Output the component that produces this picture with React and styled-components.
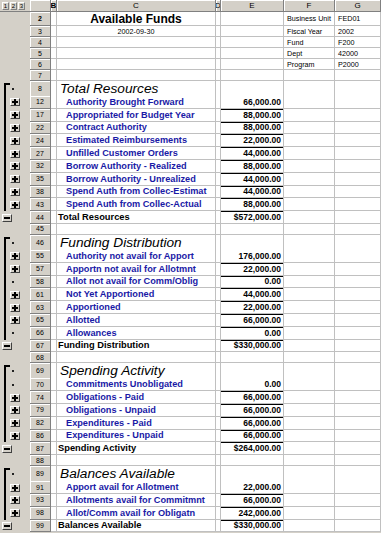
import React from "react";
import styled, { createGlobalStyle, css } from "styled-components";

const FACE = "#d4d0c8";
const GRID = "#c0c0c0";
const SHADE = "#808080";
const BLUE = "#1a1aa6";
const COLS = "30px 21px 6px 159px 5px 63px 51px 46px";

const GlobalStyle = createGlobalStyle`
  html, body {
    margin: 0;
    padding: 0;
    background: #fff;
  }
  body {
    font-family: "Liberation Sans", Arial, sans-serif;
    overflow: hidden;
  }
`;

const groups = [
  {
    row: 8,
    title: "Total Resources",
    items: [
      [12, "Authority Brought Forward", "66,000.00", "plus"],
      [17, "Appropriated for Budget Year", "88,000.00", "plus"],
      [22, "Contract Authority", "88,000.00", "plus"],
      [24, "Estimated Reimbursements", "22,000.00", "plus"],
      [27, "Unfilled Customer Orders", "44,000.00", "plus"],
      [32, "Borrow Authority - Realized", "88,000.00", "plus"],
      [35, "Borrow Authority - Unrealized", "44,000.00", "plus"],
      [38, "Spend Auth from Collec-Estimat", "44,000.00", "plus"],
      [43, "Spend Auth from Collec-Actual", "88,000.00", "plus"],
    ],
    total: [44, "Total Resources", "$572,000.00"],
    gap: 45,
  },
  {
    row: 46,
    title: "Funding Distribution",
    items: [
      [55, "Authority not avail for Apport", "176,000.00", "plus"],
      [57, "Apportn not avail for Allotmnt", "22,000.00", "plus"],
      [58, "Allot not avail for Comm/Oblig", "0.00", "dot"],
      [61, "Not Yet Apportioned", "44,000.00", "plus"],
      [63, "Apportioned", "22,000.00", "plus"],
      [65, "Allotted", "66,000.00", "plus"],
      [66, "Allowances", "0.00", "dot"],
    ],
    total: [67, "Funding Distribution", "$330,000.00"],
    gap: 68,
  },
  {
    row: 69,
    title: "Spending Activity",
    items: [
      [70, "Commitments Unobligated", "0.00", "dot"],
      [74, "Obligations - Paid", "66,000.00", "plus"],
      [79, "Obligations - Unpaid", "66,000.00", "plus"],
      [82, "Expenditures - Paid", "66,000.00", "plus"],
      [86, "Expenditures - Unpaid", "66,000.00", "plus"],
    ],
    total: [87, "Spending Activity", "$264,000.00"],
    gap: 88,
  },
  {
    row: 89,
    title: "Balances Available",
    items: [
      [91, "Apport avail for Allotment", "22,000.00", "plus"],
      [93, "Allotments avail for Commitmnt", "66,000.00", "plus"],
      [98, "Allot/Comm avail for Obligatn", "242,000.00", "plus"],
    ],
    total: [99, "Balances Available", "$330,000.00"],
  },
];

const info = [
  ["Business Unit", "FED01"],
  ["Fiscal Year", "2002"],
  ["Fund", "F200"],
  ["Dept", "42000"],
  ["Program", "P2000"],
  ["", ""],
];

const Sheet = styled.div`
  width: 381px;
  height: 533px;
  overflow: hidden;
  background: ${FACE};
`;

const Row = styled.div`
  display: grid;
  grid-template-columns: ${COLS};
  height: ${(p) => p.$h}px;
`;

const LevelBar = styled.div`
  display: flex;
  gap: 1px;
  padding: 2px 0 0 2px;
  background: ${FACE};
  border-bottom: 1px solid ${SHADE};
`;

const LevelButton = styled.span`
  display: flex;
  align-items: center;
  justify-content: center;
  width: 7px;
  height: 8px;
  box-sizing: border-box;
  border: 1px solid;
  border-color: #fff ${SHADE} ${SHADE} #fff;
  font-size: 6px;
  line-height: 1;
  color: #000;
`;

const ColHead = styled.div`
  display: flex;
  align-items: center;
  justify-content: center;
  overflow: hidden;
  box-sizing: border-box;
  background: ${FACE};
  border-right: 1px solid ${SHADE};
  border-bottom: 1px solid ${SHADE};
  box-shadow: inset 1px 1px 0 #fff;
  font-size: 8px;
  font-weight: ${(p) => (p.$active ? 700 : 400)};
  color: #000;
`;

const bracket = {
  start: css`
    background-image: linear-gradient(#000, #000), linear-gradient(#000, #000);
    background-size: 2px 100%, 6px 2px;
    background-position: 4px 2px, 4px 2px;
    background-repeat: no-repeat;
  `,
  line: css`
    background-image: linear-gradient(#000, #000);
    background-size: 2px 100%;
    background-position: 4px 0;
    background-repeat: no-repeat;
  `,
};

const Outline = styled.div`
  display: flex;
  align-items: center;
  background-color: ${FACE};
  ${(p) => p.$bracket && bracket[p.$bracket]}
`;

const OutlineButton = styled.span`
  width: 10px;
  height: 8px;
  box-sizing: border-box;
  margin-left: ${(p) => (p.$minus ? 2 : 10)}px;
  border: 1px solid;
  border-color: #fff #404040 #404040 #fff;
  background-color: ${FACE};
  background-repeat: no-repeat;
  ${(p) =>
    p.$minus
      ? css`
          background-image: linear-gradient(#000, #000);
          background-size: 6px 2px;
          background-position: 1px 2px;
        `
      : css`
          background-image: linear-gradient(#000, #000), linear-gradient(#000, #000);
          background-size: 6px 2px, 2px 6px;
          background-position: 1px 2px, 3px 0;
        `}
`;

const Dot = styled.span`
  width: 2px;
  height: 2px;
  margin-left: 12px;
  background: #222;
`;

const RowHead = styled.div`
  display: flex;
  align-items: center;
  justify-content: center;
  box-sizing: border-box;
  background: ${FACE};
  border-right: 1px solid ${SHADE};
  border-bottom: 1px solid ${SHADE};
  box-shadow: inset 1px 1px 0 #fff;
  font-size: 7px;
  font-weight: ${(p) => (p.$active ? 700 : 400)};
  color: #000;
`;

const Cell = styled.div`
  display: flex;
  align-items: center;
  box-sizing: border-box;
  min-width: 0;
  overflow: hidden;
  white-space: nowrap;
  background: #fff;
  border-right: 1px solid ${GRID};
  border-bottom: 1px solid ${GRID};
  color: #000;
`;

const TitleCell = styled(Cell)`
  justify-content: center;
  font-size: 12px;
  font-weight: 700;
`;

const DateCell = styled(Cell)`
  justify-content: center;
  font-size: 7.2px;
`;

const InfoCell = styled(Cell)`
  padding-left: 3px;
  font-size: 7.2px;
`;

const SectionCell = styled(Cell)`
  overflow: visible;
  padding-left: 3px;
  font-size: 13.7px;
  font-style: italic;
  line-height: 15px;
`;

const ItemCell = styled(Cell)`
  padding-left: 9px;
  font-size: 9.2px;
  font-weight: 700;
  color: ${BLUE};
`;

const TotalCell = styled(Cell)`
  padding-left: 1px;
  font-size: 9.3px;
  font-weight: 700;
`;

const AmountCell = styled(Cell)`
  justify-content: flex-end;
  padding-right: 2px;
  font-size: 8.5px;
  font-weight: 700;
  ${(p) =>
    p.$ruled &&
    css`
      box-shadow: inset 0 1px 0 #000;
    `}
`;

const Group = ({ group }) => {
  const [totalRow, totalLabel, totalAmount] = group.total;
  return (
    <>
      <Row $h={15}>
        <Outline $bracket="start">
          <Dot />
        </Outline>
        <RowHead>{group.row}</RowHead>
        <Cell />
        <SectionCell>{group.title}</SectionCell>
        <Cell />
        <Cell />
        <Cell />
        <Cell />
      </Row>
      {group.items.map(([num, label, amount, mark], i) => (
        <Row key={num} $h={12.8}>
          <Outline $bracket="line">
            {mark === "plus" ? <OutlineButton /> : <Dot />}
          </Outline>
          <RowHead>{num}</RowHead>
          <Cell />
          <ItemCell>{label}</ItemCell>
          <Cell />
          <AmountCell $ruled={i > 0}>{amount}</AmountCell>
          <Cell />
          <Cell />
        </Row>
      ))}
      <Row $h={12.8}>
        <Outline>
          <OutlineButton $minus />
        </Outline>
        <RowHead>{totalRow}</RowHead>
        <Cell />
        <TotalCell>{totalLabel}</TotalCell>
        <Cell />
        <AmountCell $ruled>{totalAmount}</AmountCell>
        <Cell />
        <Cell />
      </Row>
      {group.gap && (
        <Row $h={11}>
          <Outline />
          <RowHead>{group.gap}</RowHead>
          <Cell />
          <Cell />
          <Cell />
          <Cell />
          <Cell />
          <Cell />
        </Row>
      )}
    </>
  );
};

const App = () => (
  <>
    <GlobalStyle />
    <Sheet>
      <Row $h={12}>
        <LevelBar>
          <LevelButton>1</LevelButton>
          <LevelButton>2</LevelButton>
          <LevelButton>3</LevelButton>
        </LevelBar>
        <ColHead />
        <ColHead $active>B</ColHead>
        <ColHead>C</ColHead>
        <ColHead>D</ColHead>
        <ColHead>E</ColHead>
        <ColHead>F</ColHead>
        <ColHead>G</ColHead>
      </Row>

      {info.map(([label, value], i) => {
        const num = i + 2;
        return (
          <Row key={num} $h={num === 2 ? 14 : 11}>
            <Outline />
            <RowHead $active={num === 2}>{num}</RowHead>
            <Cell />
            {num === 2 ? (
              <TitleCell>Available Funds</TitleCell>
            ) : num === 3 ? (
              <DateCell>2002-09-30</DateCell>
            ) : (
              <Cell />
            )}
            <Cell />
            <Cell />
            <InfoCell>{label}</InfoCell>
            <InfoCell>{value}</InfoCell>
          </Row>
        );
      })}

      {groups.map((g) => (
        <Group key={g.row} group={g} />
      ))}
    </Sheet>
  </>
);

export default App;
